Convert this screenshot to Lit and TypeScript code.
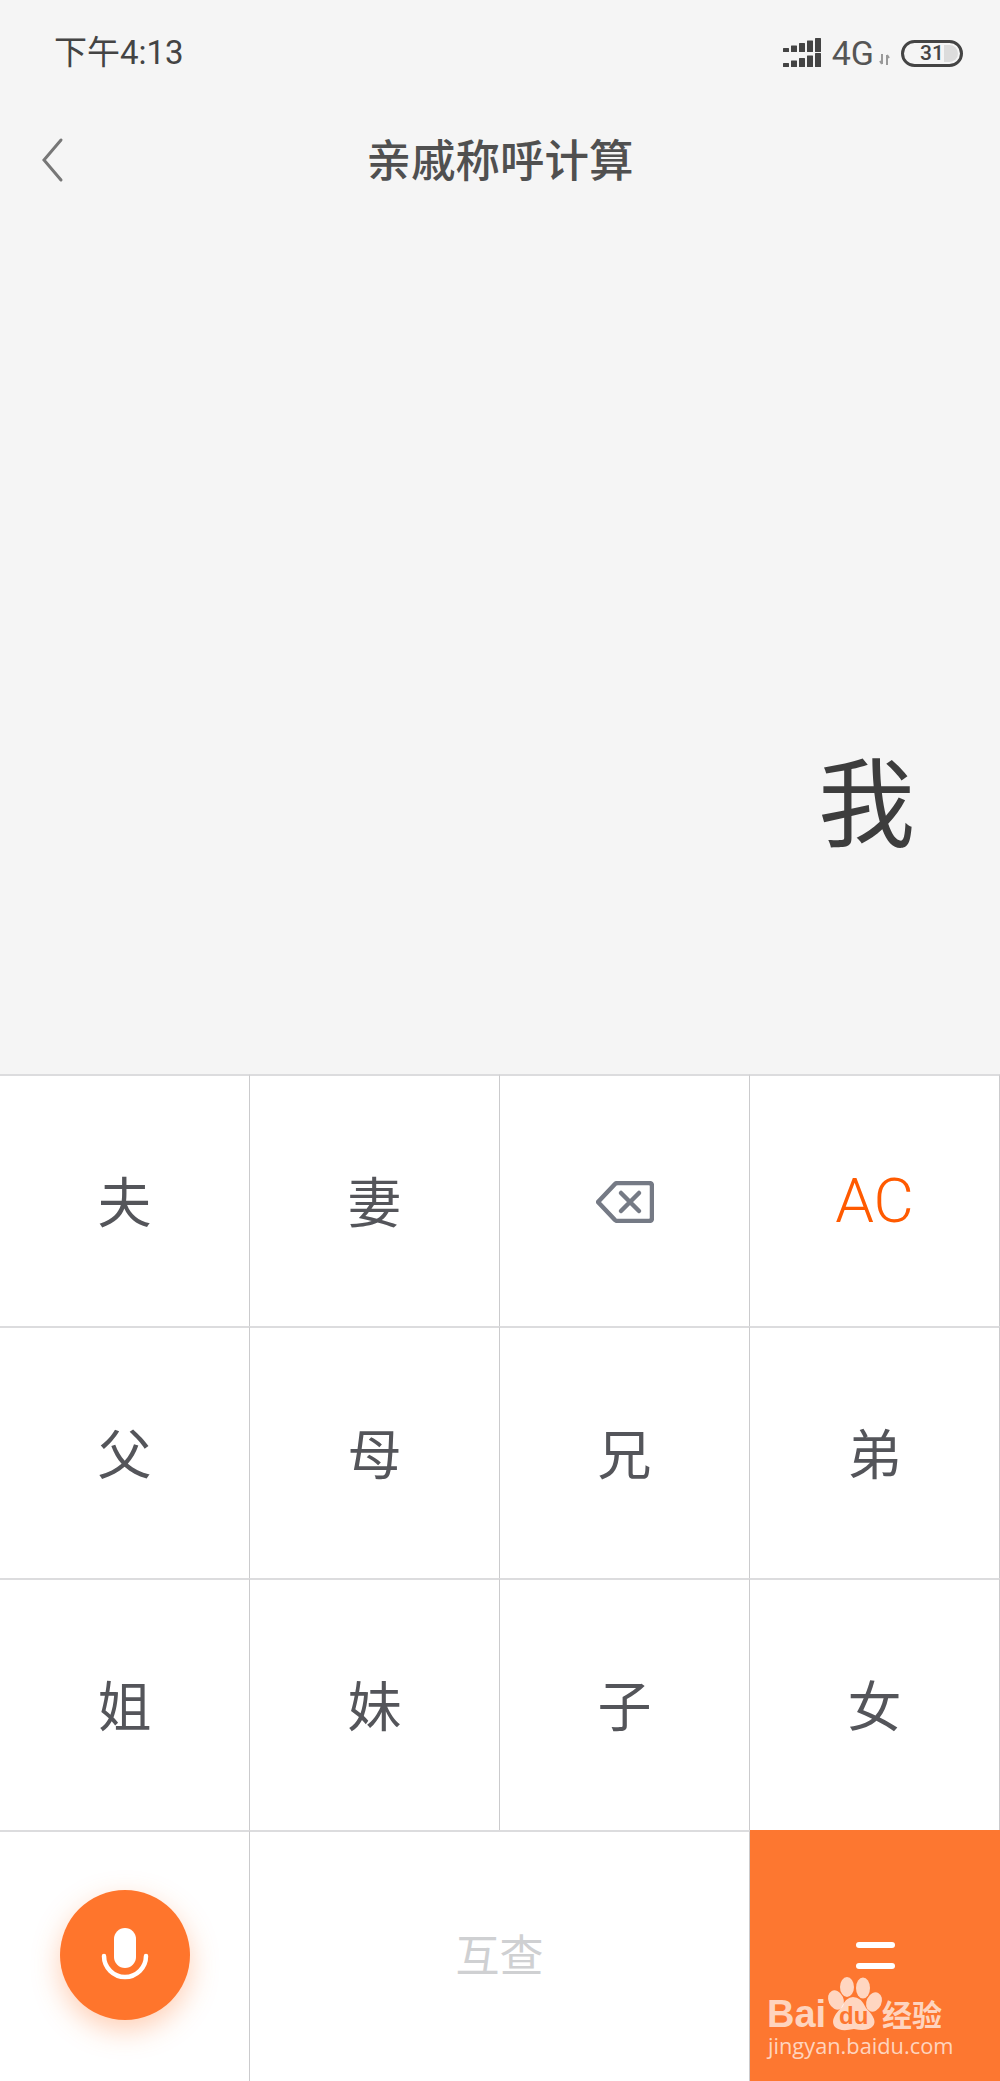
import { LitElement, html, css, svg } from 'lit';
import { customElement } from 'lit/decorators.js';

const KEYS = ['夫', '妻', 'back', 'AC', '父', '母', '兄', '弟', '姐', '妹', '子', '女'];

// five bars, growing to the right, bottom at y
const signalRow = (y: number) => [0, 1, 2, 3, 4].map(i => {
  const h = 4 + i * 2.5;
  return svg`<rect x=${i * 8} y=${y - h} width="6" height=${h} rx="0.5"></rect>`;
});

@customElement('app-root')
export class AppRoot extends LitElement {
  static styles = css`
    :host {
      display: block;
      width: 1000px;
      height: 2081px;
      background: #f5f5f5;
      font-family: 'Noto Sans CJK SC', 'Noto Sans', sans-serif;
      color: #444;
      overflow: hidden;
    }

    .status {
      height: 106px;
      box-sizing: border-box;
      padding: 0 37px 0 54px;
      display: flex;
      align-items: center;
      justify-content: space-between;
    }

    .time {
      font-family: 'Roboto', 'Noto Sans CJK SC', sans-serif;
      font-size: 33px;
      line-height: 106px;
      color: #444;
    }

    .signal {
      display: flex;
      align-items: center;
    }

    .net {
      font-family: 'Roboto', sans-serif;
      font-size: 34px;
      line-height: 1;
      color: #555;
      margin: 0 5px 0 11px;
    }

    .arrows {
      margin-top: 12px;
    }

    .battery {
      margin-left: 11px;
      position: relative;
      width: 62px;
      height: 27px;
      box-sizing: border-box;
      border: 3px solid #444;
      border-radius: 14px;
      overflow: hidden;
      display: flex;
      align-items: center;
      justify-content: center;
      font-family: 'Roboto', sans-serif;
      font-size: 21px;
      font-weight: 500;
      color: #444;
    }

    .battery .level {
      position: absolute;
      top: 2px;
      bottom: 2px;
      right: 2px;
      width: 14px;
      border-radius: 0 9px 9px 0;
      background: #dcdcdc;
    }

    .battery span {
      position: relative;
    }

    .nav {
      height: 108px;
      position: relative;
      display: flex;
      align-items: center;
      justify-content: center;
    }

    .back {
      position: absolute;
      left: 40px;
      top: 31px;
    }

    .title {
      font-size: 44.5px;
      font-weight: 500;
      color: #505050;
      line-height: 1;
      margin-top: -4px;
    }

    .display {
      height: 860px;
      box-sizing: border-box;
      padding: 0 85px 0 0;
      display: flex;
      justify-content: flex-end;
      align-items: flex-start;
    }

    .display span {
      font-size: 97px;
      line-height: 1;
      margin-top: 534px;
      color: #3d3d3d;
    }

    .pad {
      display: grid;
      grid-template-columns: repeat(4, 250px);
      grid-template-rows: repeat(3, 252px) 251px;
      background: #fff;
    }

    .key {
      box-sizing: border-box;
      border-top: 2px solid #dcdcde;
      border-right: 1px solid #cbcbcd;
      padding-bottom: 4px;
      display: flex;
      align-items: center;
      justify-content: center;
      font-size: 54px;
      color: #54555a;
    }

    .del svg {
      margin: 5px 0 0 0;
    }

    .ac {
      font-family: 'Roboto', sans-serif;
      font-weight: 300;
      font-size: 62px;
      padding-bottom: 2px;
      color: #ff5a00;
    }

    .check {
      grid-column: span 2;
      font-size: 44px;
      padding-bottom: 7px;
      color: #cfd0d2;
    }

    .mic {
      width: 130px;
      height: 130px;
      border-radius: 50%;
      background: #ff752c;
      box-shadow: 0 10px 28px rgba(255, 117, 44, 0.35);
      display: flex;
      align-items: center;
      justify-content: center;
    }

    .equals {
      position: relative;
      background: #fd7730;
      border: none;
      padding: 0;
      flex-direction: column;
      gap: 15px;
    }

    .equals i {
      display: block;
      width: 39px;
      height: 6px;
      border-radius: 3px;
      background: #fff;
    }

    .mark {
      position: absolute;
      left: 10px;
      top: 130px;
    }
  `;

  renderKey(k: string) {
    if (k === 'back') {
      return html`<div class="key del">
        <svg width="58" height="42" viewBox="0 0 58 42" fill="none" stroke="#757a85" stroke-width="4.5" stroke-linejoin="round" stroke-linecap="round">
          <path d="M2 21 L19 3 Q20 2 22 2 H53 Q56 2 56 5 V37 Q56 40 53 40 H22 Q20 40 19 39 Z"></path>
          <path d="M25 12 L43 30 M43 12 L25 30"></path>
        </svg>
      </div>`;
    }
    if (k === 'AC') return html`<div class="key ac">AC</div>`;
    return html`<div class="key">${k}</div>`;
  }

  render() {
    return html`
      <div class="status">
        <div class="time">下午4:13</div>
        <div class="signal">
          <svg width="38" height="30" viewBox="0 0 38 30" fill="#444">
            ${signalRow(14)}${signalRow(29)}
          </svg>
          <span class="net">4G</span>
          <svg class="arrows" width="11" height="11" viewBox="0 0 11 11" fill="none" stroke="#999" stroke-width="2">
            <path d="M3 0 V10 M1 7 L3 10 M8 11 V1 M10 4 L8 1"></path>
          </svg>
          <div class="battery"><div class="level"></div><span>31</span></div>
        </div>
      </div>

      <div class="nav">
        <svg class="back" width="24" height="46" viewBox="0 0 24 46" fill="none" stroke="#777" stroke-width="3" stroke-linecap="round">
          <path d="M21 3 L4 23 L21 43"></path>
        </svg>
        <div class="title">亲戚称呼计算</div>
      </div>

      <div class="display"><span>我</span></div>

      <div class="pad">
        ${KEYS.map(k => this.renderKey(k))}
        <div class="key">
          <div class="mic">
            <svg width="48" height="56" viewBox="0 0 48 56" fill="none">
              <rect x="13" y="1" width="22" height="40" rx="11" fill="#fff"></rect>
              <path d="M3 29 A21 21 0 0 0 45 29" stroke="#fff" stroke-width="4.5" stroke-linecap="round"></path>
            </svg>
          </div>
        </div>
        <div class="key check">互查</div>
        <div class="key equals">
          <i></i><i></i>
          <svg class="mark" width="200" height="110" viewBox="0 0 200 110" fill="#fff" fill-opacity="0.7">
            <ellipse cx="87" cy="27" rx="7" ry="10"></ellipse>
            <ellipse cx="103" cy="28" rx="7" ry="10.5"></ellipse>
            <ellipse cx="76" cy="40" rx="7.5" ry="10" transform="rotate(-25 76 40)"></ellipse>
            <ellipse cx="114" cy="42" rx="7.5" ry="10" transform="rotate(25 114 42)"></ellipse>
            <path d="M93 37 Q101 37 106 48 Q118 60 113 66 Q108 72 94 69 Q80 72 75 67 Q69 60 81 48 Q86 37 93 37 Z"></path>
            <text x="7" y="66.5" font-family="Liberation Sans" font-weight="700" font-size="38">Bai</text>
            <text x="79" y="64" font-family="Liberation Sans" font-weight="700" font-size="24" fill="#fd7730" fill-opacity="1">du</text>
            <text x="122" y="66" font-family="Noto Sans CJK SC" font-weight="700" font-size="30">经验</text>
            <text x="8" y="94" font-family="Open Sans" font-size="21.8">jingyan.baidu.com</text>
          </svg>
        </div>
      </div>
    `;
  }
}
